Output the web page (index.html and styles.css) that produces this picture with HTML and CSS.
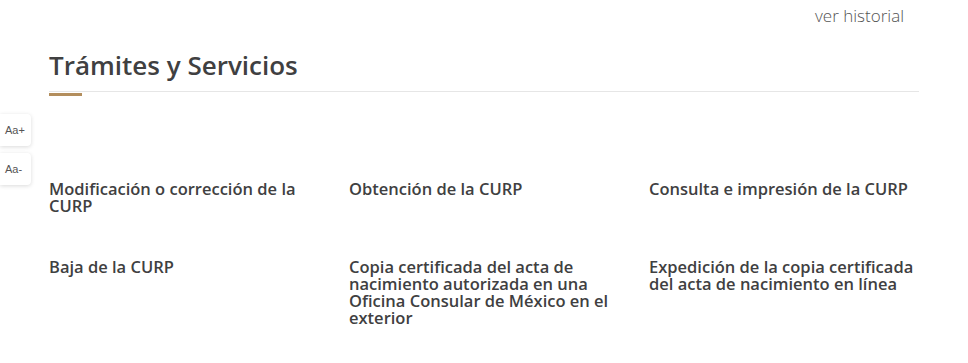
FILE: index.html
```html
<!DOCTYPE html>
<html lang="es">
<head>
<meta charset="utf-8">
<link rel="stylesheet" href="styles.css">
</head>
<body>
<div class="font-tools">
  <button class="font-btn">Aa+</button>
  <button class="font-btn">Aa-</button>
</div>
<div class="container">
  <div class="top-link"><a href="#">ver historial</a></div>
  <h2 class="section-title">Trámites y Servicios</h2>
  <div class="divider"><span class="accent"></span></div>
  <div class="grid">
    <a class="item" href="#">Modificación o corrección de la CURP</a>
    <a class="item" href="#">Obtención de la CURP</a>
    <a class="item" href="#">Consulta e impresión de la CURP</a>
    <a class="item" href="#">Baja de la CURP</a>
    <a class="item" href="#">Copia certificada del acta de nacimiento autorizada en una Oficina Consular de México en el exterior</a>
    <a class="item" href="#">Expedición de la copia certificada del acta de nacimiento en línea</a>
  </div>
</div>
</body>
</html>
```
FILE: styles.css
```css
* { box-sizing: border-box; }
html, body { margin: 0; padding: 0; background: #fff; }
body { font-family: "Open Sans", "Noto Sans", sans-serif; color: #404041; }

.container {
  width: 870px;
  margin-left: 49px;
}

.top-link {
  display: flex;
  justify-content: flex-end;
  padding-top: 4px;
  padding-right: 15px;
  height: 30px;
}
.top-link a {
  font-size: 17px;
  font-weight: 300;
  color: #545454;
  text-decoration: none;
  line-height: 24px;
}

.section-title {
  margin: 17px 0 0;
  font-size: 26px;
  font-weight: 600;
  line-height: 36px;
  color: #404041;
}

.divider {
  margin-top: 8px;
  border-top: 1px solid #e6e6e6;
  padding-top: 1px;
}
.accent {
  display: block;
  width: 33px;
  height: 3px;
  background: #b38e5d;
}

.grid {
  display: grid;
  grid-template-columns: 270px 270px 270px;
  column-gap: 30px;
  row-gap: 44px;
  margin-top: 84px;
}
.item {
  font-size: 16.5px;
  font-weight: 600;
  line-height: 17px;
  color: #404041;
  text-decoration: none;
}

.font-tools {
  position: absolute;
  left: 0;
  top: 114px;
  display: flex;
  flex-direction: column;
  gap: 7px;
}
.font-btn {
  width: 31px;
  height: 32px;
  padding: 0 0 0 5px;
  border: none;
  background: #fff;
  border-radius: 0 4px 4px 0;
  box-shadow: 0 1px 4px rgba(0,0,0,0.15);
  font-family: "Liberation Sans", Arial, sans-serif;
  font-size: 11px;
  color: #555;
  text-align: left;
}
```
